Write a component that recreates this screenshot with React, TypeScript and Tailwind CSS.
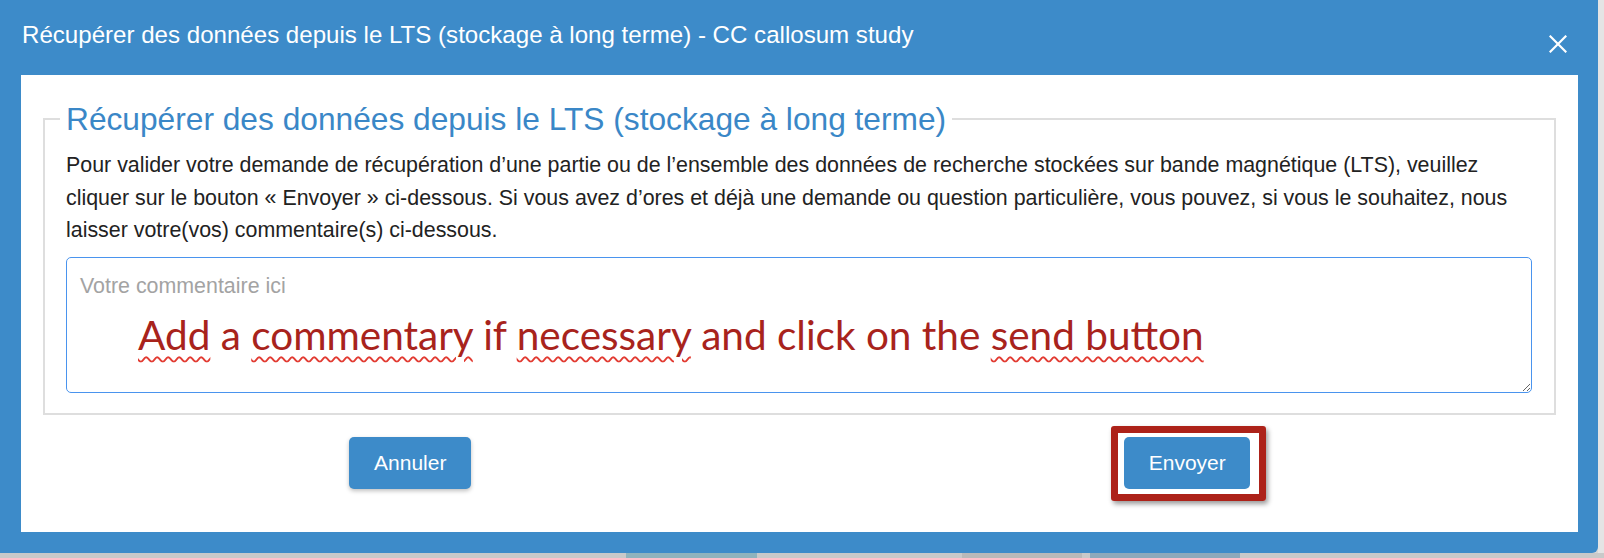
const BLUE = "bg-[#3d8bc9]";

const CloseIcon = () => (
  <svg width="18" height="18" viewBox="0 0 18 18" className="mt-[35px]">
    <path d="M1.5 1.5 L16.5 16.5 M16.5 1.5 L1.5 16.5" stroke="#ffffff" strokeWidth="2.2" strokeLinecap="square" />
  </svg>
);

const Wavy = ({ children }: { children: React.ReactNode }) => (
  <span className="underline decoration-wavy decoration-[#e23b32] decoration-[1.5px] underline-offset-[6px]">
    {children}
  </span>
);

export default function App() {
  return (
    <div className="flex h-[558px] w-[1604px] flex-col bg-[#d6d6d6] font-['Liberation_Sans',Arial,sans-serif]">
      <div className="flex">
        <div className={`flex h-[553px] w-[1598px] flex-col rounded-br-[6px] ${BLUE}`}>
          {/* header */}
          <div className="flex h-[75px] items-start justify-between pl-[22px] pr-[31px]">
            <h4 className="pt-[21px] text-[24.1px] leading-[28px] text-white">
              Récupérer des données depuis le LTS (stockage à long terme) - CC callosum study
            </h4>
            <CloseIcon />
          </div>

          {/* body */}
          <div className="ml-[21px] mr-[20px] bg-white pb-[31px]">
            <div className="px-[22px] pt-[26px]">
              <fieldset className="border-2 border-[#dedede] pb-[20px] pl-[21px] pr-[22px]">
                <legend className="-ml-[6px] px-[6px] text-[31.7px] leading-[36px] text-[#3a87c7]">
                  Récupérer des données depuis le LTS (stockage à long terme)
                </legend>
                <p className="mt-[12px] text-[21.4px] leading-[32.5px] text-[#222222]">
                  Pour valider votre demande de récupération d’une partie ou de l’ensemble des données de recherche stockées sur bande magnétique (LTS), veuillez
                  <br />
                  cliquer sur le bouton « Envoyer » ci-dessous. Si vous avez d’ores et déjà une demande ou question particulière, vous pouvez, si vous le souhaitez, nous
                  <br />
                  laisser votre(vos) commentaire(s) ci-dessous.
                </p>
                <div className="relative mt-[10px]">
                  <textarea
                    placeholder="Votre commentaire ici"
                    className="block h-[136px] w-full rounded-[5px] border-[1.5px] border-[#4a94ee] px-[13px] pt-[12px] text-[21.4px] text-[#333] outline-none placeholder:text-[#a3a3a3]"
                  />
                  <div className="pointer-events-none absolute left-[72px] top-[54px] whitespace-nowrap font-['Lato',sans-serif] text-[40.5px] leading-[48px] text-[#a8231c]">
                    <Wavy>Add</Wavy> a <Wavy>commentary</Wavy> if <Wavy>necessary</Wavy> and click on the{" "}
                    <Wavy>send button</Wavy>
                  </div>
                </div>
              </fieldset>
            </div>

            {/* actions */}
            <div className="mt-[11px] grid grid-cols-2 items-center">
              <div className="flex justify-center">
                <button className={`h-[52px] w-[122px] rounded-[5px] text-[21px] text-white shadow-[0_2px_4px_rgba(0,0,0,0.25)] ${BLUE}`}>
                  Annuler
                </button>
              </div>
              <div className="flex justify-center">
                <div className="rounded-[3px] border-[7px] border-[#ad2219] pb-[5px] pl-[6px] pr-[9px] pt-[4px] shadow-[2px_3px_5px_rgba(0,0,0,0.4)]">
                  <button className={`block h-[52px] w-[126px] rounded-[5px] text-[21px] text-white ${BLUE}`}>
                    Envoyer
                  </button>
                </div>
              </div>
            </div>
          </div>
        </div>
        <div className="flex-1 bg-[#e4e4e4]" />
      </div>
      <div className="flex flex-1 bg-[#c9c9c9]">
        <div className="ml-[626px] w-[131px] bg-[#8fb3bd]" />
        <div className="ml-[205px] w-[120px] bg-[#b9b9b9]" />
        <div className="ml-[8px] w-[150px] bg-[#8da9bb]" />
      </div>
    </div>
  );
}
